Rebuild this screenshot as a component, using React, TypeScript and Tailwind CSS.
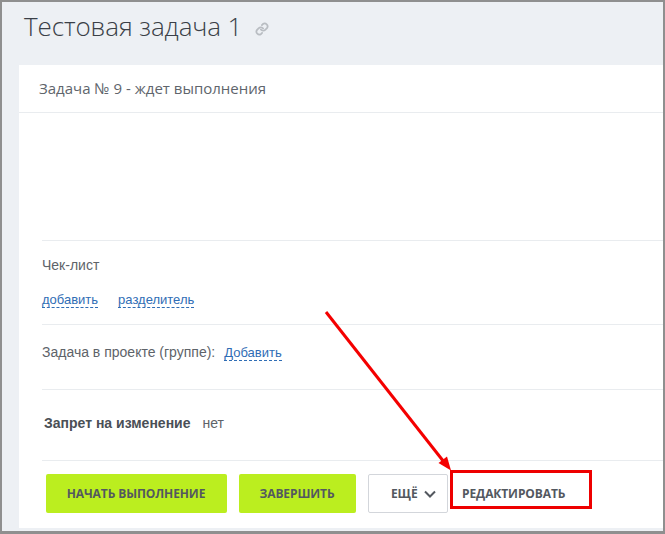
import React from "react";

const DashedLink = ({ children }: { children: React.ReactNode }) => (
  <span className="border-b border-dashed border-[#2f6db5] text-[13px] text-[#2f6db5] leading-[15px] inline-block">{children}</span>
);

export default function App() {
  return (
    <div className="relative w-[665px] h-[534px] overflow-hidden border-t-2 border-l-2 border-r-2 border-b-[3px] border-[#8f8f8f] bg-[#edf0f4] font-['Liberation_Sans',sans-serif]">
      {/* Title */}
      <div className="h-[63px] pl-[22px] flex items-start">
        <h1 className="mt-[6px] text-[26px] leading-[36px] font-light tracking-[-0.1px] text-[#3a3f47] font-['Open_Sans',sans-serif]">
          Тестовая задача 1
        </h1>
        <svg className="ml-[13px] mt-[20px]" width="14" height="14" viewBox="0 0 24 24" fill="none" stroke="#b9bdc2" strokeWidth="3" strokeLinecap="round" strokeLinejoin="round">
          <path d="M10 13a5 5 0 0 0 7.5.5l3-3a5 5 0 0 0-7-7l-1.7 1.7" />
          <path d="M14 11a5 5 0 0 0-7.5-.5l-3 3a5 5 0 0 0 7 7l1.7-1.7" />
        </svg>
      </div>

      {/* Card */}
      <div className="ml-[17px] h-[463px] bg-white flex flex-col">
        <div className="h-[48px] border-b border-[#e9ecef] pl-[20px] flex items-center text-[15px] text-[#60656c] font-['Open_Sans',sans-serif]">
          Задача № 9 - ждет выполнения
        </div>

        <div className="h-[128px] ml-[23px] border-b border-[#e9ecef]" />

        <div className="ml-[23px] h-[84px] border-b border-[#e9ecef] pt-[17px]">
          <div className="leading-[15px] text-[14px] text-[#5e6369]">Чек-лист</div>
          <div className="mt-[19px] flex gap-[20px]">
            <DashedLink>добавить</DashedLink>
            <DashedLink>разделитель</DashedLink>
          </div>
        </div>

        <div className="ml-[23px] h-[65px] border-b border-[#e9ecef] pt-[20px] flex items-start gap-[9px]">
          <span className="leading-[15px] text-[14px] text-[#5e6369]">Задача в проекте (группе):</span>
          <DashedLink>Добавить</DashedLink>
        </div>

        <div className="ml-[23px] h-[70px] pl-[2px] pt-[26px] text-[14px] flex items-start gap-[12px] leading-[15px]">
          <span className="font-bold text-[#4a4f56]">Запрет на изменение</span>
          <span className="text-[#5e6369]">нет</span>
        </div>

        <div className="ml-[23px] border-t border-[#e9ecef] pt-[13px] pl-[4px] flex items-center font-['Open_Sans',sans-serif] text-[12px] font-bold tracking-[-0.1px] text-[#53585f]">
          <button className="w-[181px] h-[39px] pr-[1px] rounded-[2px] bg-[#bbee1f] text-[#53585f]">НАЧАТЬ ВЫПОЛНЕНИЕ</button>
          <button className="ml-[12px] w-[117px] h-[39px] pr-[1px] rounded-[2px] bg-[#bbee1f] text-[#53585f]">ЗАВЕРШИТЬ</button>
          <button className="ml-[12px] w-[80px] h-[39px] rounded-[2px] border border-[#d3d6db] flex items-center justify-start pl-[22px] gap-[6px]">
            ЕЩЁ
            <svg width="12" height="8" viewBox="0 0 12 8" fill="none" stroke="#53585f" strokeWidth="2">
              <path d="M1 1.5l5 5 5-5" />
            </svg>
          </button>
          <span className="ml-[14px]">РЕДАКТИРОВАТЬ</span>
        </div>
      </div>

      {/* Annotation overlay */}
      <div className="absolute left-[448px] top-[468px] w-[142px] h-[39px] border-[3px] border-[#ee0000]" />
      <svg className="absolute left-0 top-0" width="661" height="529" viewBox="0 0 661 529" fill="none">
        <path d="M324 310L442 460" stroke="#f40000" strokeWidth="3" />
        <path d="M449 468.5L436.5 461L445 454.5Z" fill="#f40000" />
      </svg>
    </div>
  );
}
